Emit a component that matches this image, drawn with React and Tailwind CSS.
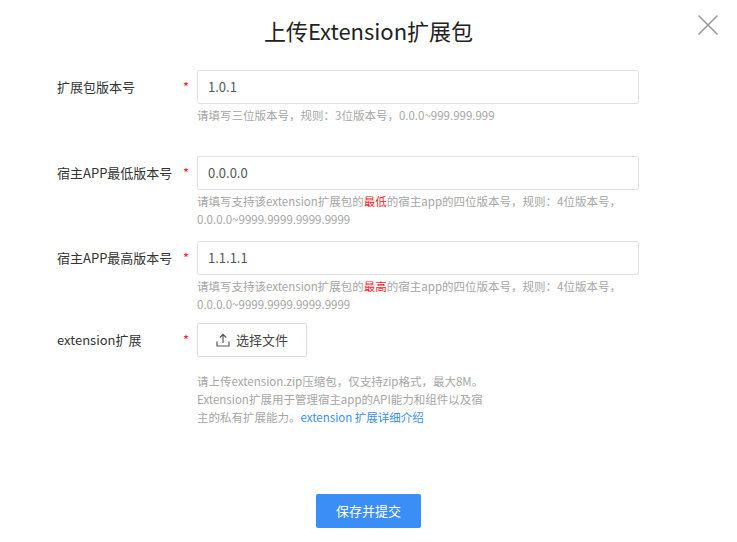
import React from "react";

const font = { fontFamily: '"PingFang SC","Noto Sans CJK SC",sans-serif' };

const Row = ({ label, children, className = "" }) => (
  <div className={`flex ${className}`}>
    <div className="w-[140px] pl-[57px] h-[34px] flex items-center text-[13px] text-[#333] whitespace-nowrap">{label}</div>
    <div className="w-[57px] h-[34px] flex items-center pl-[43px] text-[#f5222d] text-[13px]">*</div>
    <div className="w-[442px]">{children}</div>
  </div>
);

const Input = ({ value }) => (
  <div className="h-[34px] border border-[#e2e2e2] rounded-[2px] flex items-center px-[10px] text-[13px] text-[#555]">{value}</div>
);

const Hint = ({ children }) => (
  <div className="mt-[2px] text-[11.5px] leading-[18px] text-[#a6a6a6]">{children}</div>
);

export default function App() {
  return (
    <div className="relative w-[737px] h-[542px] bg-white" style={font}>
      <div className="absolute right-[19px] top-[15px]">
        <svg width="20" height="20" viewBox="0 0 20 20" stroke="#9a9a9a" strokeWidth="1.6" strokeLinecap="round">
          <path d="M1 1L19 19M19 1L1 19" />
        </svg>
      </div>
      <div className="pt-[15px] text-center text-[22px] leading-[31px] text-[#222]">上传Extension扩展包</div>
      <Row label="扩展包版本号" className="mt-[24px]">
        <Input value="1.0.1" />
        <Hint>请填写三位版本号，规则：3位版本号，0.0.0~999.999.999</Hint>
      </Row>
      <Row label="宿主APP最低版本号" className="mt-[32px]">
        <Input value="0.0.0.0" />
        <Hint>请填写支持该extension扩展包的<span className="text-[#f5222d]">最低</span>的宿主app的四位版本号，规则：4位版本号，<br />0.0.0.0~9999.9999.9999.9999</Hint>
      </Row>
      <Row label="宿主APP最高版本号" className="mt-[13px]">
        <Input value="1.1.1.1" />
        <Hint>请填写支持该extension扩展包的<span className="text-[#f5222d]">最高</span>的宿主app的四位版本号，规则：4位版本号，<br />0.0.0.0~9999.9999.9999.9999</Hint>
      </Row>
      <Row label="extension扩展" className="mt-[10px]">
        <div className="w-[110px] h-[34px] border border-[#dcdcdc] rounded-[2px] flex items-center justify-center gap-[6px] text-[13px] text-[#444]">
          <svg width="14" height="14" viewBox="0 0 14 14" fill="none" stroke="#555" strokeWidth="1.2">
            <path d="M7 10V1.5M3.8 4.5L7 1.3l3.2 3.2M1 8.5V13h12V8.5" />
          </svg>
          选择文件
        </div>
        <div className="mt-[15px] text-[11.5px] leading-[18px] text-[#a6a6a6]">
          请上传extension.zip压缩包，仅支持zip格式，最大8M。<br />
          Extension扩展用于管理宿主app的API能力和组件以及宿<br />
          主的私有扩展能力。<span className="text-[#3a8ef6]">extension 扩展详细介绍</span>
        </div>
      </Row>
      <div className="flex justify-center mt-[68px]">
        <div className="w-[105px] h-[34px] bg-[#3a8ef6] rounded-[2px] text-white text-[13px] flex items-center justify-center">保存并提交</div>
      </div>
    </div>
  );
}
